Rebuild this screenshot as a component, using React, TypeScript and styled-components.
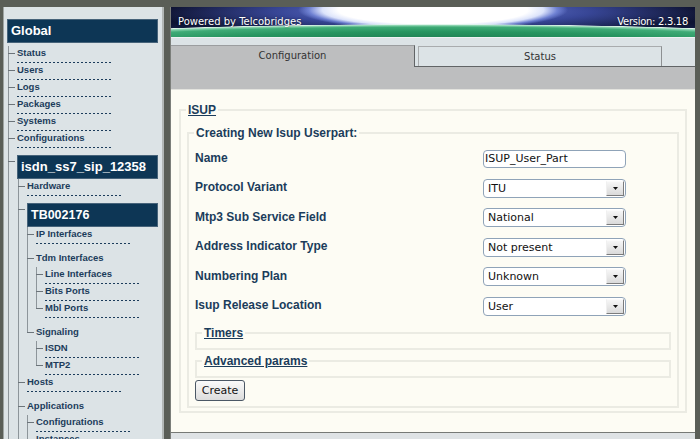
import React from 'react';
import styled, { createGlobalStyle } from 'styled-components';

const GlobalStyle = createGlobalStyle`
  html, body { margin: 0; padding: 0; background: #5a5e57; }
  body { font-family: "Liberation Sans", Arial, sans-serif; }
  * { box-sizing: border-box; }
`;

const NAVY = '#1b3c5b';

const Page = styled.div`
  width: 700px;
  height: 439px;
  overflow: hidden;
  display: flex;
  align-items: flex-start;
  gap: 6px;
  padding: 7px 0 0 3px;
  background: #5a5e57;
`;

/* ---------------- Sidebar ---------------- */

const Sidebar = styled.nav`
  width: 161px;
  height: 440px;
  flex: none;
  background: #dce3e6;
  border-left: 1px solid #9ea4a2;
  border-right: 2px solid #b2b7b6;
  padding: 12px 4px 0 3px;
  overflow: hidden;
`;

const SideBox = styled.div<{ $size: number }>`
  height: 24px;
  background: #0d3655;
  border: 1px solid #46637a;
  color: #fff;
  font: bold ${(p) => p.$size}px/22px "Liberation Sans", Arial, sans-serif;
  padding-left: 3px;
  white-space: nowrap;
`;

const TreeList = styled.ul<{ $shift: number; $top?: number }>`
  list-style: none;
  margin: 0 0 0 ${(p) => p.$shift}px;
  padding: ${(p) => p.$top ?? 0}px 0 0 9px;
`;

const TreeItem = styled.li<{ $pad: number; $tick: number; $last: boolean }>`
  position: relative;
  padding-top: ${(p) => p.$pad}px;
  &::before {
    content: '';
    position: absolute;
    left: -9px;
    top: 0;
    width: 1px;
    height: ${(p) => (p.$last ? `${p.$tick + 1}px` : '100%')};
    background: #8d959a;
  }
  &::after {
    content: '';
    position: absolute;
    left: -9px;
    top: ${(p) => p.$tick}px;
    width: 7px;
    height: 1px;
    background: #6c747a;
  }
`;

const Leaf = styled.a`
  display: block;
  width: 96px;
  height: 17px;
  font: bold 9.5px/14px "Liberation Sans", Arial, sans-serif;
  color: ${NAVY};
  text-decoration: none;
  white-space: nowrap;
  background: repeating-linear-gradient(to right, ${NAVY} 0 2px, transparent 2px 4px) left bottom / 100% 1px no-repeat;
`;

const GroupLabel = styled.div`
  height: 16px;
  font: bold 9.5px/14px "Liberation Sans", Arial, sans-serif;
  color: ${NAVY};
  white-space: nowrap;
`;

type Kind = 'leaf' | 'label' | 'box';
interface TreeNode {
  label: string;
  kind: Kind;
  size?: number;
  more?: boolean;
  children?: TreeNode[];
}

const leaf = (label: string): TreeNode => ({ label, kind: 'leaf' });

const tree: TreeNode[] = [
  leaf('Status'),
  leaf('Users'),
  leaf('Logs'),
  leaf('Packages'),
  leaf('Systems'),
  leaf('Configurations'),
  {
    label: 'isdn_ss7_sip_12358',
    kind: 'box',
    size: 13,
    more: true,
    children: [
      leaf('Hardware'),
      {
        label: 'TB002176',
        kind: 'box',
        size: 12.5,
        children: [
          leaf('IP Interfaces'),
          {
            label: 'Tdm Interfaces',
            kind: 'label',
            children: [leaf('Line Interfaces'), leaf('Bits Ports'), leaf('Mbl Ports')],
          },
          {
            label: 'Signaling',
            kind: 'label',
            children: [leaf('ISDN'), leaf('MTP2')],
          },
        ],
      },
      leaf('Hosts'),
      {
        label: 'Applications',
        kind: 'label',
        more: true,
        children: [leaf('Configurations'), leaf('Instances')],
      },
    ],
  },
];

const padFor: Record<Kind, number> = { leaf: 0, label: 7, box: 7 };
const tickFor: Record<Kind, number> = { leaf: 7, label: 14, box: 13 };

function Tree({ nodes, depth }: { nodes: TreeNode[]; depth: number }) {
  return (
    <TreeList $shift={depth < 2 ? 1 : 0} $top={depth === 0 ? 3 : 0}>
      {nodes.map((n, i) => {
        const last = !n.more && i === nodes.length - 1;
        return (
          <TreeItem key={n.label + i} $pad={padFor[n.kind]} $tick={tickFor[n.kind]} $last={last}>
            {n.kind === 'leaf' && <Leaf href="#">{n.label}</Leaf>}
            {n.kind === 'label' && <GroupLabel>{n.label}</GroupLabel>}
            {n.kind === 'box' && <SideBox $size={n.size ?? 13}>{n.label}</SideBox>}
            {n.children && <Tree nodes={n.children} depth={depth + 1} />}
          </TreeItem>
        );
      })}
    </TreeList>
  );
}

/* ---------------- Main ---------------- */

const Main = styled.main`
  width: 525px;
  height: 432px;
  flex: none;
  display: flex;
  flex-direction: column;
  border-left: 1px solid #7b7e7a;
  background: #dce3e6;
`;

const Banner = styled.header`
  height: 30px;
  flex: none;
  display: flex;
  justify-content: space-between;
  align-items: center;
  padding: 0 7px 1px 7px;
  color: #fff;
  font: 10px "DejaVu Sans", Verdana, sans-serif;
  text-shadow: 0 0 2px rgba(0, 0, 0, 0.6);
  background:
    radial-gradient(ellipse 410px 17px at 50% 34px, #1d7a4f 0%, #279560 55%, #3fab76 82%, #8fd6b2 92%, #dff5ea 97%, rgba(255, 255, 255, 0) 100%),
    radial-gradient(ellipse 135px 20px at 50% 3px, #ffffff 0%, #ffffff 70%, rgba(228, 235, 255, 0.95) 82%, rgba(140, 160, 240, 0.6) 92%, rgba(90, 110, 220, 0) 100%),
    radial-gradient(ellipse 290px 24px at 50% 4px, rgba(125, 145, 245, 0.95) 0%, rgba(80, 100, 210, 0.65) 55%, rgba(30, 40, 120, 0) 100%),
    linear-gradient(#05071a 0%, #0e1534 55%, #1a2756 100%);
`;

const Version = styled.span`
  letter-spacing: -0.3px;
`;

const Strip = styled.div`
  height: 8px;
  flex: none;
  background: #dce3e6;
  border-top: 1px solid #eef2f2;
`;

const TabRow = styled.div`
  height: 22px;
  flex: none;
  display: flex;
  align-items: flex-end;
  position: relative;
  background: #dce3e6;
  &::after {
    content: '';
    position: absolute;
    left: 0;
    right: 0;
    bottom: 0;
    height: 1px;
    background: #616466;
  }
`;

const Tab = styled.div<{ $active?: boolean }>`
  position: relative;
  z-index: ${(p) => (p.$active ? 1 : 0)};
  width: 244px;
  height: ${(p) => (p.$active ? 22 : 21)}px;
  margin-left: ${(p) => (p.$active ? 0 : 3)}px;
  display: flex;
  justify-content: center;
  padding-top: 3px;
  font: 10px/14px "DejaVu Sans", Verdana, sans-serif;
  color: #333;
  background: ${(p) => (p.$active ? '#bdbebf' : '#dce3e6')};
  border-top: 1px solid ${(p) => (p.$active ? '#9b9d9f' : '#a9acae')};
  border-left: ${(p) => (p.$active ? 'none' : '1px solid #a9acae')};
  border-right: 1px solid ${(p) => (p.$active ? '#616466' : '#8d9092')};
`;

const GrayBar = styled.div`
  height: 23px;
  flex: none;
  background: #bdbebf;
  border-bottom: 1px solid #e3e3de;
`;

const Content = styled.section`
  height: 342px;
  flex: none;
  background: #fdfcf4;
  padding: 13px 8px 0 8px;
`;

const Footer = styled.div`
  flex: 1;
  background: #dfe3e5;
  border-top: 1px solid #777a76;
`;

const FieldSet = styled.fieldset<{ $pt: number; $pb: number; $mt?: number }>`
  margin: ${(p) => p.$mt ?? 0}px 0 0 0;
  padding: ${(p) => p.$pt}px 6px ${(p) => p.$pb}px 6px;
  border: 2px solid #ebebe3;
  min-width: 0;
`;

const Legend = styled.legend<{ $link?: boolean }>`
  margin-left: -1px;
  padding: 0 2px;
  font: bold 12px/14px "Liberation Sans", Arial, sans-serif;
  color: ${NAVY};
  text-decoration: ${(p) => (p.$link ? 'underline' : 'none')};
`;

const FormGrid = styled.div`
  display: grid;
  grid-template-columns: 288px 143px;
  grid-auto-rows: 29.5px;
  align-items: center;
`;

const Label = styled.label`
  font: bold 12px/14px "Liberation Sans", Arial, sans-serif;
  color: ${NAVY};
  padding-bottom: 2px;
`;

const TextInput = styled.input`
  width: 143px;
  height: 18px;
  border: 1px solid #8fa3b8;
  border-radius: 4px;
  padding: 0 1px;
  font: 11px "DejaVu Sans", Verdana, sans-serif;
  color: #111;
  background: #fff;
  outline: none;
`;

const SelectBox = styled.div`
  width: 143px;
  height: 19px;
  display: flex;
  align-items: center;
  justify-content: space-between;
  border: 1px solid #8fa3b8;
  border-radius: 4px;
  padding: 0 1px 0 4px;
  background: #fff;
  font: 11px "DejaVu Sans", Verdana, sans-serif;
  color: #111;
`;

const DropButton = styled.span`
  width: 18px;
  height: 15px;
  display: flex;
  align-items: center;
  justify-content: center;
  background: linear-gradient(#f6f6f6, #dadada);
  border-top: 1px solid #fbfbfb;
  border-left: 1px solid #f0f0f0;
  border-right: 1px solid #7c7c7c;
  border-bottom: 1px solid #7c7c7c;
`;

const CreateButton = styled.button`
  display: block;
  margin-top: 2px;
  width: 50px;
  height: 21px;
  padding: 0;
  border: 1px solid #4b5765;
  border-radius: 3px;
  background: linear-gradient(#fafafa, #dcdcdc);
  font: 11px "DejaVu Sans", Verdana, sans-serif;
  color: #111;
`;

function Select({ value }: { value: string }) {
  return (
    <SelectBox role="combobox">
      <span>{value}</span>
      <DropButton>
        <svg width="5" height="3" viewBox="0 0 5 3">
          <polygon points="0,0 5,0 2.5,3" fill="#111" />
        </svg>
      </DropButton>
    </SelectBox>
  );
}

const rows: { label: string; value: string; text?: boolean }[] = [
  { label: 'Name', value: 'ISUP_User_Part', text: true },
  { label: 'Protocol Variant', value: 'ITU' },
  { label: 'Mtp3 Sub Service Field', value: 'National' },
  { label: 'Address Indicator Type', value: 'Not present' },
  { label: 'Numbering Plan', value: 'Unknown' },
  { label: 'Isup Release Location', value: 'User' },
];

export default function App() {
  return (
    <>
      <GlobalStyle />
      <Page>
        <Sidebar>
          <SideBox $size={13}>Global</SideBox>
          <Tree nodes={tree} depth={0} />
        </Sidebar>
        <Main>
          <Banner>
            <span>Powered by Telcobridges</span>
            <Version>Version: 2.3.18</Version>
          </Banner>
          <Strip />
          <TabRow>
            <Tab $active>Configuration</Tab>
            <Tab>Status</Tab>
          </TabRow>
          <GrayBar />
          <Content>
            <FieldSet $pt={9} $pb={3}>
              <Legend $link>ISUP</Legend>
              <FieldSet $pt={4} $pb={5}>
                <Legend>Creating New Isup Userpart:</Legend>
                <FormGrid>
                  {rows.map((r) => (
                    <React.Fragment key={r.label}>
                      <Label>{r.label}</Label>
                      {r.text ? <TextInput defaultValue={r.value} /> : <Select value={r.value} />}
                    </React.Fragment>
                  ))}
                </FormGrid>
                <FieldSet $pt={0} $pb={8} $mt={5}>
                  <Legend $link>Timers</Legend>
                </FieldSet>
                <FieldSet $pt={0} $pb={8} $mt={4}>
                  <Legend $link>Advanced params</Legend>
                </FieldSet>
                <CreateButton>Create</CreateButton>
              </FieldSet>
            </FieldSet>
          </Content>
          <Footer />
        </Main>
      </Page>
    </>
  );
}
